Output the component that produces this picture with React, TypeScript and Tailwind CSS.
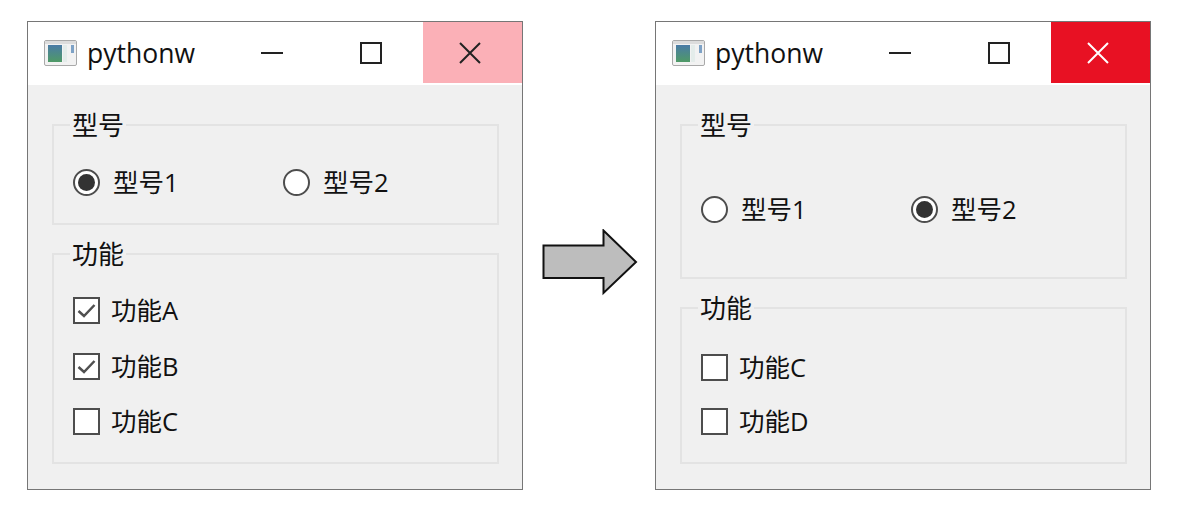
import React from "react";

function AppIcon() {
  return (
    <svg width="33" height="26" viewBox="0 0 33 26" className="shrink-0">
      <rect x="0.5" y="0.5" width="32" height="25" rx="1.5" fill="#f2f2f2" stroke="#a9a9a9" />
      <rect x="1" y="1" width="31" height="3" fill="#dcdcdc" />
      <defs>
        <linearGradient id="g" x1="0" y1="0" x2="0" y2="1">
          <stop offset="0" stopColor="#4a7ba6" />
          <stop offset="1" stopColor="#4f9a66" />
        </linearGradient>
      </defs>
      <rect x="4" y="5" width="14" height="17" fill="url(#g)" />
      <rect x="19" y="5" width="4" height="17" fill="#e4ecea" />
      <rect x="27" y="5" width="3" height="8" fill="#7ea2c6" />
    </svg>
  );
}

function Radio({ on, label }: { on?: boolean; label: string }) {
  return (
    <div className="flex items-center gap-[13px] w-[210px]">
      <span className="w-[27px] h-[27px] rounded-full border-2 border-[#4d4d4d] bg-white flex items-center justify-center shrink-0">
        {on && <span className="w-[17px] h-[17px] rounded-full bg-[#333333]" />}
      </span>
      <span className="leading-[30px]">{label}</span>
    </div>
  );
}

function Check({ on, label, className = "" }: { on?: boolean; label: string; className?: string }) {
  return (
    <div className={`flex items-center gap-[11px] h-[30px] ${className}`}>
      <span className="w-[27px] h-[27px] border-2 border-[#4d4d4d] bg-white flex items-center justify-center shrink-0">
        {on && (
          <svg width="21" height="15" viewBox="0 0 21 15">
            <path d="M2.5 8 L8 13 L18.5 2" fill="none" stroke="#505050" strokeWidth="2.5" />
          </svg>
        )}
      </span>
      <span className="leading-[30px]">{label}</span>
    </div>
  );
}

function Group({ title, h, children }: { title: string; h: string; children: React.ReactNode }) {
  return (
    <fieldset className={`border-2 border-[#e3e3e3] pl-[19px] min-w-0 ${h}`}>
      <legend className="ml-[-3px] px-[2px] text-[26px] leading-[30px]">{title}</legend>
      {children}
    </fieldset>
  );
}

function Win({ closeBg, closeStroke, children }: { closeBg: string; closeStroke: string; children: React.ReactNode }) {
  return (
    <div className="w-[496px] h-[469px] border border-[#767676] bg-[#f0f0f0] flex flex-col shrink-0">
      <div className="h-[63px] bg-white flex items-start">
        <div className="flex items-center pl-[16px] h-[61px] w-[222px]">
          <AppIcon />
          <span className="ml-[10px] text-[26.5px] leading-[30px] text-[#111]">pythonw</span>
        </div>
        <div className="flex h-[61px] flex-1 justify-end">
          <div className="w-[99px] flex items-center justify-center pr-[5px]">
            <svg width="24" height="4" viewBox="0 0 24 4"><path d="M1 2H23" stroke="#222" strokeWidth="2" /></svg>
          </div>
          <div className="w-[99px] flex items-center justify-center pr-[6px]">
            <svg width="22" height="22" viewBox="0 0 22 22"><rect x="1" y="1" width="20" height="20" fill="none" stroke="#222" strokeWidth="2" /></svg>
          </div>
          <div className={`w-[99px] h-[61px] flex items-center justify-center pr-[6px] ${closeBg}`}>
            <svg width="24" height="24" viewBox="0 0 24 24"><path d="M2 2L22 22M22 2L2 22" stroke={closeStroke} strokeWidth="2" /></svg>
          </div>
        </div>
      </div>
      {children}
    </div>
  );
}

export default function App() {
  return (
    <div
      className="w-[1183px] h-[510px] bg-white pt-[21px] pl-[27px] flex items-start text-[#111] text-[25.5px]"
      style={{ fontFamily: '"Open Sans", "Noto Sans CJK SC", sans-serif' }}
    >
      <Win closeBg="bg-[#fbb0b7]" closeStroke="#222">
        <div className="pl-[24px] pr-[23px] pt-[25px] flex flex-col gap-[14px]">
          <Group title="型号" h="h-[115px]">
            <div className="flex pt-[27px]">
              <Radio on label="型号1" />
              <Radio label="型号2" />
            </div>
          </Group>
          <Group title="功能" h="h-[225px]">
            <div className="flex flex-col gap-[25px] pt-[26px]">
              <Check on label="功能A" />
              <Check on label="功能B" className="mt-[1px]" />
              <Check label="功能C" />
            </div>
          </Group>
        </div>
      </Win>
      <div className="w-[132px] h-[469px] pl-[19px] pt-[208px] shrink-0">
        <svg width="98" height="68" viewBox="0 0 98 68">
          <path d="M1.5 16.5H61.5V1.5L94 33L61.5 64V49H1.5Z" fill="#bdbdbd" stroke="#111" strokeWidth="2" />
        </svg>
      </div>
      <Win closeBg="bg-[#e81123]" closeStroke="#ffffff">
        <div className="pl-[24px] pr-[23px] pt-[25px] flex flex-col gap-[14px]">
          <Group title="型号" h="h-[169px]">
            <div className="flex pt-[54px]">
              <Radio label="型号1" />
              <Radio on label="型号2" />
            </div>
          </Group>
          <Group title="功能" h="h-[171px]">
            <div className="flex flex-col gap-[24px] pt-[29px]">
              <Check label="功能C" />
              <Check label="功能D" />
            </div>
          </Group>
        </div>
      </Win>
    </div>
  );
}
